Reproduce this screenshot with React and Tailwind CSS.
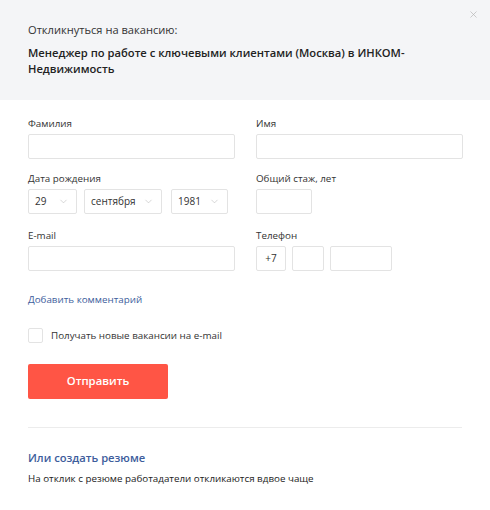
import { X, ChevronDown } from "lucide-react";

function Label({ children }) {
  return <div className="text-[9.8px] leading-[14px] text-[#333] mb-[3px]">{children}</div>;
}

function Box({ className = "", children }) {
  return (
    <div className={`h-[25px] border border-[#e3e3e3] rounded-[2px] bg-white flex items-center text-[10px] text-[#333] ${className}`}>
      {children}
    </div>
  );
}

function Select({ value, className }) {
  return (
    <Box className={`justify-between pl-[6px] pr-[7px] ${className}`}>
      <span>{value}</span>
      <ChevronDown size={11} strokeWidth={1.1} className="text-[#b0b0b0]" />
    </Box>
  );
}

export default function App() {
  return (
    <div className="w-[490px] h-[510px] bg-white font-['Open_Sans',sans-serif] text-[#222] overflow-hidden">
      <div className="relative h-[100px] bg-[#f4f5f7] px-[28px] pt-[21px]">
        <X size={11} strokeWidth={1.5} className="absolute right-[11px] top-[9px] text-[#b5b5b5]" />
        <div className="text-[11.1px] leading-[18px] text-[#333]">Откликнуться на вакансию:</div>
        <div className="mt-[6px] text-[11.2px] leading-[16px] font-semibold text-[#222] pr-[40px]">
          Менеджер по работе с ключевыми клиентами (Москва) в ИНКОМ-Недвижимость
        </div>
      </div>

      <div className="px-[28px] pt-[17px]">
        <div className="grid grid-cols-[207px_207px] gap-x-[21px]">
          <div>
            <Label>Фамилия</Label>
            <Box />
          </div>
          <div>
            <Label>Имя</Label>
            <Box />
          </div>
        </div>

        <div className="grid grid-cols-[207px_207px] gap-x-[21px] mt-[13px]">
          <div>
            <Label>Дата рождения</Label>
            <div className="flex gap-[7px]">
              <Select value="29" className="w-[49px]" />
              <Select value="сентября" className="w-[78px] mr-[2px]" />
              <Select value="1981" className="w-[57px]" />
            </div>
          </div>
          <div>
            <Label>Общий стаж, лет</Label>
            <Box className="w-[56px]" />
          </div>
        </div>

        <div className="grid grid-cols-[207px_207px] gap-x-[21px] mt-[15px]">
          <div>
            <Label>E-mail</Label>
            <Box />
          </div>
          <div>
            <Label>Телефон</Label>
            <div className="flex gap-[6px]">
              <Box className="w-[30px] justify-center">+7</Box>
              <Box className="w-[32px]" />
              <Box className="w-[62px]" />
            </div>
          </div>
        </div>

        <div className="mt-[22px] text-[9.8px] leading-[14px] text-[#3d5d9c]">Добавить комментарий</div>

        <div className="mt-[21px] flex items-center gap-[8px]">
          <div className="w-[15px] h-[15px] border border-[#e3e3e3] rounded-[2px]" />
          <span className="text-[9.8px] leading-[14px] text-[#333]">Получать новые вакансии на e-mail</span>
        </div>

        <button className="mt-[21px] w-[140px] h-[35px] bg-[#ff5545] rounded-[2px] text-white text-[11.3px] font-semibold block">
          Отправить
        </button>

        <div className="mt-[28px] border-t border-[#ececec]" />

        <div className="mt-[22px] text-[11.2px] leading-[16px] font-semibold text-[#3d5d9c]">Или создать резюме</div>
        <div className="mt-[6px] text-[9.8px] leading-[14px] text-[#222]">
          На отклик с резюме работадатели откликаются вдвое чаще
        </div>
      </div>
    </div>
  );
}
